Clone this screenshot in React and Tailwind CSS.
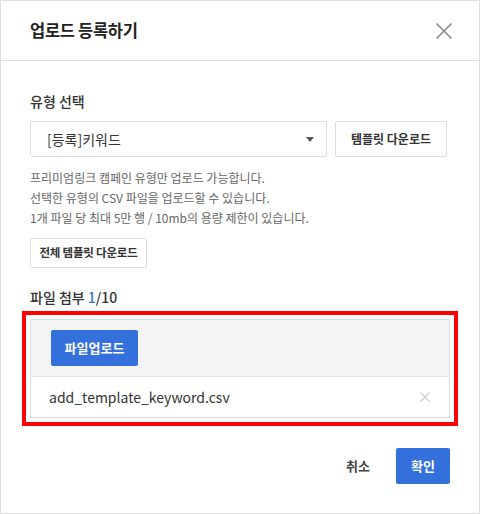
import React from "react";

export default function App() {
  return (
    <div
      className="w-[480px] h-[514px] bg-white border border-[#dddddd] flex flex-col text-[#333333]"
      style={{ fontFamily: '"Noto Sans CJK KR", "Noto Sans", sans-serif' }}
    >
      {/* Header */}
      <div className="h-[60px] shrink-0 border-b border-[#dddddd] flex items-center justify-between pl-[29px] pr-[26px]">
        <h1 className="text-[16.5px] font-bold text-[#222222] tracking-[-0.3px]">업로드 등록하기</h1>
        <svg width="18" height="18" viewBox="0 0 18 18" className="text-[#8a8a8a]">
          <path d="M1.5 1.5 L16.5 16.5 M16.5 1.5 L1.5 16.5" stroke="currentColor" strokeWidth="1.6" fill="none" />
        </svg>
      </div>

      {/* Body */}
      <div className="flex flex-col px-[29px] pt-[30px]">
        <div className="text-[14px] font-medium text-[#333333] leading-[20px]">유형 선택</div>
        <div className="flex gap-[8px] mt-[10px]">
          <div className="w-[297px] h-[36px] border border-[#dddddd] rounded-[2px] flex items-center justify-between pl-[16px] pr-[12px]">
            <span className="text-[14px] text-[#333333]">[등록]키워드</span>
            <svg width="8" height="5" viewBox="0 0 8 5">
              <path d="M0 0 L8 0 L4 5 Z" fill="#555555" />
            </svg>
          </div>
          <div className="w-[112px] h-[36px] border border-[#dddddd] rounded-[2px] flex items-center justify-center text-[12px] font-bold text-[#333333]">
            템플릿 다운로드
          </div>
        </div>
        <div className="mt-[11px] text-[12px] text-[#666666] leading-[20px]">
          <p>프리미엄링크 캠페인 유형만 업로드 가능합니다.</p>
          <p>선택한 유형의 CSV 파일을 업로드할 수 있습니다.</p>
          <p>1개 파일 당 최대 5만 행 / 10mb의 용량 제한이 있습니다.</p>
        </div>
        <div className="mt-[10px] w-[117px] h-[30px] border border-[#dddddd] rounded-[2px] flex items-center justify-center text-[11.5px] font-bold text-[#333333] tracking-[-0.2px]">
          전체 템플릿 다운로드
        </div>
        <div className="mt-[19px] text-[14px] font-medium leading-[20px] text-[#333333]">
          파일 첨부 <span className="text-[#3a72dc]">1</span>/10
        </div>

        {/* Red annotated box */}
        <div className="mt-[4px] -mx-[8px] border-[4px] border-[#ff0000] p-[4px]">
          <div className="border border-[#dddddd]">
            <div className="bg-[#f4f4f4] h-[57px] border-b border-[#e2e2e2] flex items-center pl-[20px]">
              <div className="w-[87px] h-[36px] bg-[#3370dc] rounded-[2px] flex items-center justify-center text-white text-[13px] font-bold">
                파일업로드
              </div>
            </div>
            <div className="h-[40px] flex items-center justify-between pl-[18px] pr-[19px]">
              <span className="text-[14px] text-[#333333]">add_template_keyword.csv</span>
              <svg width="10" height="10" viewBox="0 0 10 10">
                <path d="M0.5 0.5 L9.5 9.5 M9.5 0.5 L0.5 9.5" stroke="#cccccc" strokeWidth="1.2" fill="none" />
              </svg>
            </div>
          </div>
        </div>

        {/* Footer */}
        <div className="flex justify-end items-center mt-[22px]">
          <span className="text-[13px] font-bold text-[#444444] mr-[26px]">취소</span>
          <div className="w-[54px] h-[36px] bg-[#3370dc] rounded-[2px] flex items-center justify-center text-white text-[13px] font-bold">
            확인
          </div>
        </div>
      </div>
    </div>
  );
}
